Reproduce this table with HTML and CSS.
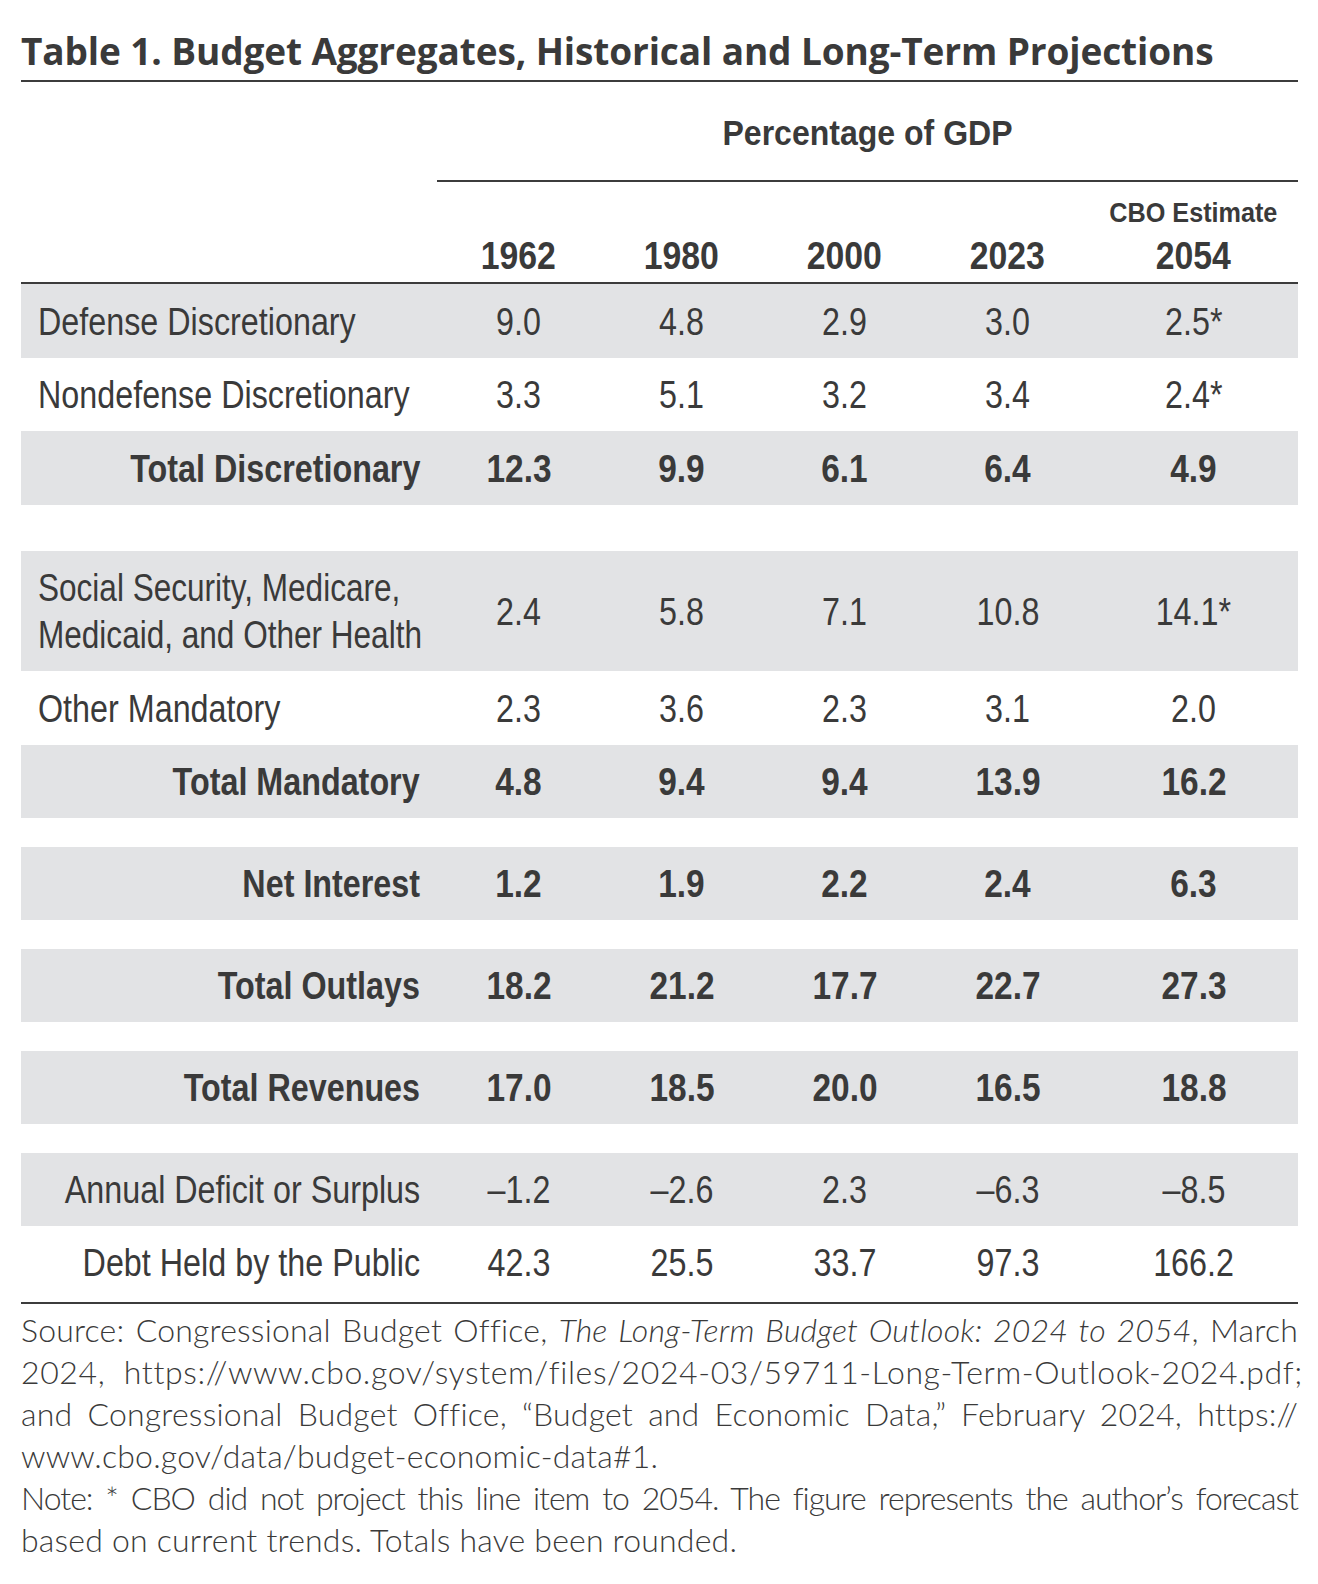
FILE: index.html
```html
<!DOCTYPE html>
<html lang="en">
<head>
<meta charset="utf-8">
<title>Table 1. Budget Aggregates</title>
<link rel="stylesheet" href="styles.css">
</head>
<body>
<div class="page">
  <h1 class="title">Table 1. Budget Aggregates, Historical and Long-Term Projections</h1>
  <div class="table">
    <div class="grid head">
      <div class="pct"><span class="t">Percentage of GDP</span></div>
    </div>
    <div class="grid years">
      <div class="label"></div>
      <div class="yr"><span class="t">1962</span></div>
      <div class="yr"><span class="t">1980</span></div>
      <div class="yr"><span class="t">2000</span></div>
      <div class="yr"><span class="t">2023</span></div>
      <div class="yr"><div class="cbo"><span class="t">CBO Estimate</span></div><span class="t">2054</span></div>
    </div>

    <div class="grid row shade">
      <div class="label"><span class="t">Defense Discretionary</span></div>
      <div class="val"><span class="t">9.0</span></div><div class="val"><span class="t">4.8</span></div><div class="val"><span class="t">2.9</span></div><div class="val"><span class="t">3.0</span></div><div class="val"><span class="t">2.5*</span></div>
    </div>
    <div class="grid row">
      <div class="label"><span class="t">Nondefense Discretionary</span></div>
      <div class="val"><span class="t">3.3</span></div><div class="val"><span class="t">5.1</span></div><div class="val"><span class="t">3.2</span></div><div class="val"><span class="t">3.4</span></div><div class="val"><span class="t">2.4*</span></div>
    </div>
    <div class="grid row shade total">
      <div class="label"><span class="t">Total Discretionary</span></div>
      <div class="val"><span class="t">12.3</span></div><div class="val"><span class="t">9.9</span></div><div class="val"><span class="t">6.1</span></div><div class="val"><span class="t">6.4</span></div><div class="val"><span class="t">4.9</span></div>
    </div>
    <div class="gap big"></div>
    <div class="grid row shade tall">
      <div class="label two"><span class="t">Social Security, Medicare,<br>Medicaid, and Other Health</span></div>
      <div class="val"><span class="t">2.4</span></div><div class="val"><span class="t">5.8</span></div><div class="val"><span class="t">7.1</span></div><div class="val"><span class="t">10.8</span></div><div class="val"><span class="t">14.1*</span></div>
    </div>
    <div class="grid row">
      <div class="label"><span class="t">Other Mandatory</span></div>
      <div class="val"><span class="t">2.3</span></div><div class="val"><span class="t">3.6</span></div><div class="val"><span class="t">2.3</span></div><div class="val"><span class="t">3.1</span></div><div class="val"><span class="t">2.0</span></div>
    </div>
    <div class="grid row shade total">
      <div class="label"><span class="t">Total Mandatory</span></div>
      <div class="val"><span class="t">4.8</span></div><div class="val"><span class="t">9.4</span></div><div class="val"><span class="t">9.4</span></div><div class="val"><span class="t">13.9</span></div><div class="val"><span class="t">16.2</span></div>
    </div>
    <div class="gap"></div>
    <div class="grid row shade total">
      <div class="label"><span class="t">Net Interest</span></div>
      <div class="val"><span class="t">1.2</span></div><div class="val"><span class="t">1.9</span></div><div class="val"><span class="t">2.2</span></div><div class="val"><span class="t">2.4</span></div><div class="val"><span class="t">6.3</span></div>
    </div>
    <div class="gap"></div>
    <div class="grid row shade total">
      <div class="label"><span class="t">Total Outlays</span></div>
      <div class="val"><span class="t">18.2</span></div><div class="val"><span class="t">21.2</span></div><div class="val"><span class="t">17.7</span></div><div class="val"><span class="t">22.7</span></div><div class="val"><span class="t">27.3</span></div>
    </div>
    <div class="gap"></div>
    <div class="grid row shade total">
      <div class="label"><span class="t">Total Revenues</span></div>
      <div class="val"><span class="t">17.0</span></div><div class="val"><span class="t">18.5</span></div><div class="val"><span class="t">20.0</span></div><div class="val"><span class="t">16.5</span></div><div class="val"><span class="t">18.8</span></div>
    </div>
    <div class="gap"></div>
    <div class="grid row shade right">
      <div class="label"><span class="t">Annual Deficit or Surplus</span></div>
      <div class="val"><span class="t">–1.2</span></div><div class="val"><span class="t">–2.6</span></div><div class="val"><span class="t">2.3</span></div><div class="val"><span class="t">–6.3</span></div><div class="val"><span class="t">–8.5</span></div>
    </div>
    <div class="grid row right last">
      <div class="label"><span class="t">Debt Held by the Public</span></div>
      <div class="val"><span class="t">42.3</span></div><div class="val"><span class="t">25.5</span></div><div class="val"><span class="t">33.7</span></div><div class="val"><span class="t">97.3</span></div><div class="val"><span class="t">166.2</span></div>
    </div>
  </div>
  <div class="notes">
    <div class="line">Source: Congressional Budget Office, <em>The Long-Term Budget Outlook: 2024 to 2054</em>, March</div>
    <div class="line url">2024, &nbsp;https://www.cbo.gov/system/files/2024-03/59711-Long-Term-Outlook-2024.pdf;</div>
    <div class="line">and Congressional Budget Office, “Budget and Economic Data,” February 2024, https://</div>
    <div class="line end">www.cbo.gov/data/budget-economic-data#1.</div>
    <div class="line tight">Note: * CBO did not project this line item to 2054. The figure represents the author’s forecast</div>
    <div class="line end">based on current trends. Totals have been rounded.</div>
  </div>
</div>
</body>
</html>
```

FILE: styles.css
```css
html, body {
  margin: 0;
  background: #ffffff;
}

.page {
  padding: 0 20px 0 21px;
  color: #3a3a3a;
}

.title {
  margin: 0;
  padding: 29px 0 7px;
  font-family: "Open Sans", "Lato", sans-serif;
  font-weight: 700;
  font-size: 37px;
  line-height: 44px;
  letter-spacing: -0.12px;
  white-space: nowrap;
  border-bottom: 2px solid #3c3c3c;
}

.table {
  font-family: "Liberation Sans", Arial, sans-serif;
}

.t {
  display: inline-block;
  white-space: nowrap;
  transform: scaleX(0.85);
  transform-origin: center center;
}

.grid {
  display: grid;
  grid-template-columns: 416px repeat(4, 163px) 1fr;
}

.pct {
  grid-column: 2 / -1;
  text-align: center;
  font-weight: 700;
  font-size: 35px;
  line-height: 40px;
  padding: 31px 0 27px;
  border-bottom: 2px solid #3c3c3c;
}

.pct .t {
  transform: scaleX(0.915);
}

.years {
  align-items: end;
  padding: 16px 0 5px;
  border-bottom: 2px solid #3c3c3c;
  font-weight: 700;
  font-size: 38px;
  line-height: 42px;
}

.yr {
  text-align: center;
}

.yr .t {
  transform: scaleX(0.89);
}

.cbo {
  font-size: 28px;
  line-height: 30px;
  margin-bottom: 7px;
}

.cbo .t {
  transform: scaleX(0.9);
}

.row {
  height: 73.5px;
  align-items: center;
  font-size: 38px;
  line-height: 42px;
  padding-top: 2px;
  box-sizing: border-box;
}

.row.tall {
  height: 120.5px;
}

.row.last {
  height: 78px;
  border-bottom: 2px solid #3c3c3c;
  padding-bottom: 4px;
}

.shade {
  background: #e2e3e5;
}

.label {
  display: flex;
  justify-content: flex-start;
  padding: 0 17px;
}

.label .t {
  transform-origin: left center;
}

.label.two {
  line-height: 47px;
}

.label.two .t {
  transform: scaleX(0.83);
}

.total .label,
.right .label {
  justify-content: flex-end;
}

.total .label .t,
.right .label .t {
  transform-origin: right center;
}

.total {
  font-weight: 700;
}

.total .val .t {
  transform: scaleX(0.88);
}

.val {
  text-align: center;
}

.gap {
  height: 28.5px;
}

.gap.big {
  height: 46px;
}

.notes {
  padding-top: 5px;
  font-family: "Lato", "Open Sans", sans-serif;
  font-weight: 300;
  font-size: 32px;
  line-height: 42px;
  letter-spacing: 0.2px;
}

.line {
  text-align: justify;
  text-align-last: justify;
  white-space: nowrap;
}

.line.end {
  text-align: left;
  text-align-last: left;
}

.line.url {
  letter-spacing: 0.6px;
}

.line.tight {
  letter-spacing: -1px;
}
```
